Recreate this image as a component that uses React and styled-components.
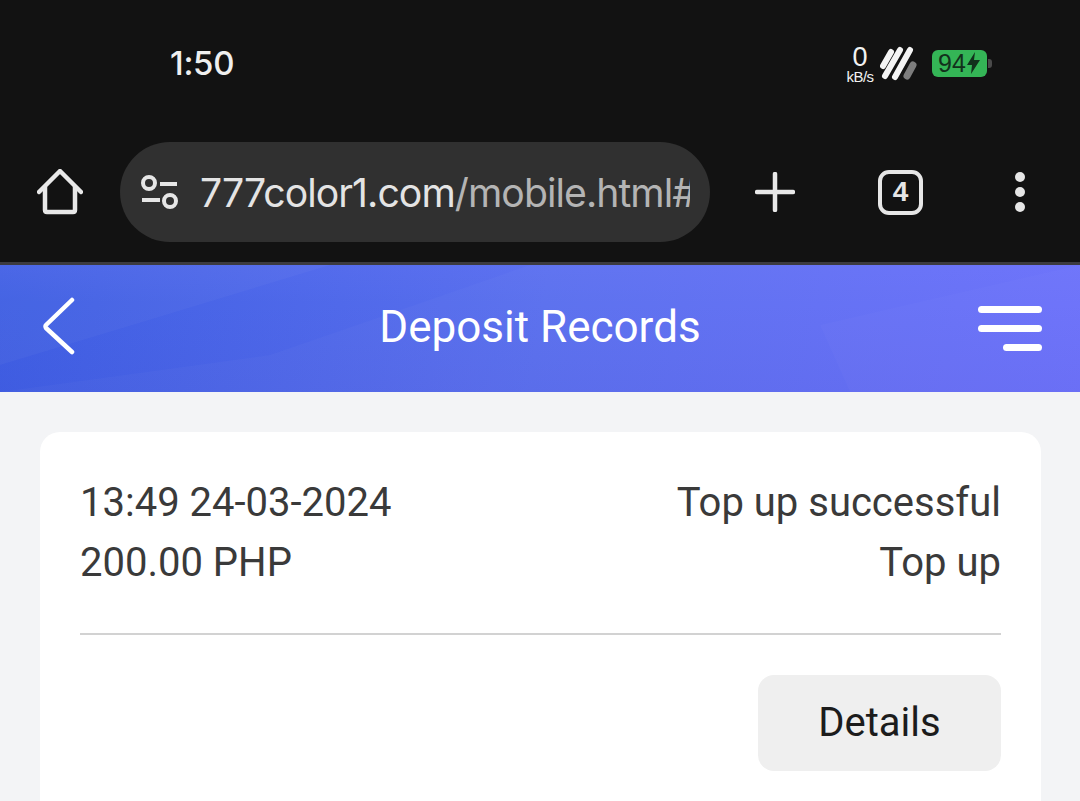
import React from "react";
import styled, { createGlobalStyle } from "styled-components";

const Global = createGlobalStyle`
  html, body { margin: 0; padding: 0; background: #f3f4f6; }
  body { width: 1080px; height: 801px; overflow: hidden; font-family: Roboto, "Liberation Sans", sans-serif; }
`;

const Page = styled.div`
  width: 1080px;
  height: 801px;
  overflow: hidden;
  background: #f3f4f6;
`;

const StatusBar = styled.div`
  height: 126px;
  box-sizing: border-box;
  background: #121212;
  padding: 0 93px 0 170px;
  display: flex;
  align-items: center;
  justify-content: space-between;
`;

const Clock = styled.div`
  font-family: Inter, "Open Sans", sans-serif;
  font-size: 33px;
  font-weight: 500;
  color: #efefef;
  letter-spacing: -0.3px;
`;

const StatusIcons = styled.div`
  display: flex;
  align-items: center;
`;

const Speed = styled.div`
  width: 28px;
  margin-right: 6px;
  margin-top: 3px;
  display: flex;
  flex-direction: column;
  align-items: center;
  color: #f2f2f2;
  font-family: "Liberation Sans", sans-serif;
  span:first-child { font-size: 27px; line-height: 23px; }
  span:last-child { font-size: 15px; line-height: 15px; letter-spacing: -0.6px; white-space: nowrap; }
`;

const Battery = styled.div`
  width: 55px;
  height: 27px;
  margin-left: 14px;
  box-sizing: border-box;
  border-radius: 6px;
  background: #34b556;
  color: #12301c;
  display: flex;
  align-items: center;
  justify-content: center;
  font-family: "Liberation Sans", sans-serif;
  font-size: 25px;
  position: relative;
  &::after {
    content: "";
    position: absolute;
    right: -5px;
    top: 9px;
    width: 4px;
    height: 9px;
    border-radius: 0 3px 3px 0;
    background: #4a4a4a;
  }
`;

const Toolbar = styled.div`
  height: 139px;
  box-sizing: border-box;
  background: #121212;
  border-bottom: 3px solid #3c3b40;
  padding: 16px 55px 20px 37px;
  display: flex;
  align-items: center;
`;

const UrlPill = styled.div`
  width: 590px;
  height: 100px;
  margin-left: 37px;
  margin-right: 45px;
  box-sizing: border-box;
  border-radius: 50px;
  background: #303030;
  padding: 0 20px 0 21px;
  display: flex;
  align-items: center;
  overflow: hidden;
`;

const UrlText = styled.div`
  margin-left: 21px;
  font-family: Inter, "Open Sans", sans-serif;
  font-size: 39.2px;
  letter-spacing: -0.95px;
  color: #e4e4e4;
  white-space: nowrap;
  overflow: hidden;
  flex: 1;
  span { color: #b4b4b4; }
`;

const ToolIcons = styled.div`
  display: flex;
  align-items: center;
`;

const TabCount = styled.div`
  width: 45px;
  height: 45px;
  margin-left: 83px;
  margin-right: 92px;
  box-sizing: border-box;
  border: 4px solid #e6e6e6;
  border-radius: 11px;
  color: #e6e6e6;
  display: flex;
  align-items: center;
  justify-content: center;
  font-family: "Liberation Sans", sans-serif;
  font-weight: 700;
  font-size: 28px;
`;

const Dots = styled.div`
  display: flex;
  flex-direction: column;
  gap: 5px;
  i { display: block; width: 10px; height: 10px; border-radius: 50%; background: #e6e6e6; }
`;

const Header = styled.div`
  height: 127px;
  box-sizing: border-box;
  background:
    linear-gradient(180deg, rgba(120, 130, 255, 0.12) 0%, rgba(60, 60, 200, 0) 30%, rgba(50, 50, 190, 0.08) 100%),
    linear-gradient(100deg, #3f5fe3 0%, #5a6fee 50%, #6a6ffa 100%);
  padding: 0 40px;
  display: grid;
  grid-template-columns: 1fr auto 1fr;
  align-items: center;
  position: relative;
  overflow: hidden;
`;

const Sheen = styled.svg`
  position: absolute;
  inset: 0;
  pointer-events: none;
`;

const BackIcon = styled.svg`
  position: relative;
  margin-left: 2px;
  margin-bottom: 6px;
`;

const Title = styled.div`
  font-size: 44px;
  color: #fff;
  margin-bottom: 4px;
  position: relative;
`;

const Burger = styled.div`
  justify-self: end;
  margin-right: -2px;
  display: flex;
  flex-direction: column;
  align-items: flex-end;
  gap: 12px;
  position: relative;
  i { display: block; height: 7px; width: 64px; border-radius: 4px; background: #fff; }
  i:last-child { width: 39px; }
`;

const Content = styled.div`
  padding: 40px 39px 0 40px;
`;

const Card = styled.div`
  background: #fff;
  border-radius: 20px;
  padding: 41px 40px 30px;
  height: 420px;
  box-sizing: border-box;
`;

const Row = styled.div`
  display: flex;
  justify-content: space-between;
  height: 60px;
  line-height: 60px;
  font-size: 40px;
  color: #3a3a3a;
`;

const Divider = styled.div`
  height: 2px;
  background: #d2d2d2;
  margin-top: 40px;
`;

const Actions = styled.div`
  display: flex;
  justify-content: flex-end;
  margin-top: 40px;
`;

const DetailsButton = styled.div`
  width: 243px;
  height: 96px;
  padding-bottom: 2px;
  box-sizing: border-box;
  border-radius: 16px;
  background: #efefef;
  color: #1c1c1c;
  font-size: 40px;
  display: flex;
  align-items: center;
  justify-content: center;
`;

export default function App() {
  return (
    <Page>
      <Global />
      <StatusBar>
        <Clock>1:50</Clock>
        <StatusIcons>
          <Speed>
            <span>0</span>
            <span>kB/s</span>
          </Speed>
          <svg width="38" height="36" viewBox="0 0 38 36" fill="none" strokeLinecap="round">
            <path d="M3 21 L11 7" stroke="#f4f4f4" strokeWidth="6" />
            <path d="M5 31 L20 5" stroke="#f4f4f4" strokeWidth="6" />
            <path d="M15 32 L30 5" stroke="#f4f4f4" strokeWidth="6" />
            <path d="M27 31 L33 20" stroke="#7d7d7d" strokeWidth="7" />
          </svg>
          <Battery>
            94
            <svg width="15" height="22" viewBox="0 0 15 22">
              <path d="M9 0 L1 13 H6 L5 22 L14 8 H8 Z" fill="#12301c" />
            </svg>
          </Battery>
        </StatusIcons>
      </StatusBar>
      <Toolbar>
        <svg width="46" height="46" viewBox="0 0 46 46" fill="none" stroke="#e8e8e8" strokeWidth="4.5" strokeLinecap="round" strokeLinejoin="round">
          <path d="M2 23 L23 2 L44 23" />
          <path d="M8 18 V41 Q8 43 10 43 H36 Q38 43 38 41 V18" />
        </svg>
        <UrlPill>
          <svg width="38" height="34" viewBox="0 0 38 34" fill="none" stroke="#e6e6e6" strokeWidth="4">
            <circle cx="8" cy="8" r="6" />
            <path d="M19 9 H36" />
            <path d="M1 25 H19" />
            <circle cx="29" cy="26" r="6" />
          </svg>
          <UrlText>
            777color1.com<span>/mobile.html#</span>
          </UrlText>
        </UrlPill>
        <ToolIcons>
          <svg width="40" height="40" viewBox="0 0 40 40" stroke="#e8e8e8" strokeWidth="4.5" strokeLinecap="round">
            <path d="M20 2 V38" />
            <path d="M2 20 H38" />
          </svg>
          <TabCount>4</TabCount>
          <Dots>
            <i />
            <i />
            <i />
          </Dots>
        </ToolIcons>
      </Toolbar>
      <Header>
        <Sheen width="1080" height="127" viewBox="0 0 1080 127" fill="none">
          <path d="M0 100 L330 0 H0 Z" fill="#ffffff" opacity="0.03" />
          <path d="M0 127 L270 90 L530 0 L1080 0 V127 Z" fill="#ffffff" opacity="0.025" />
          <path d="M820 60 L850 127 H1080 V0 Z" fill="#ffffff" opacity="0.02" />
        </Sheen>
        <BackIcon width="34" height="58" viewBox="0 0 34 58" fill="none" stroke="#fff" strokeWidth="4.5" strokeLinecap="round" strokeLinejoin="round">
          <path d="M30 3 L4 28 Q3 29 4 31 L30 55" />
        </BackIcon>
        <Title>Deposit Records</Title>
        <Burger>
          <i />
          <i />
          <i />
        </Burger>
      </Header>
      <Content>
        <Card>
          <Row>
            <span>13:49 24-03-2024</span>
            <span>Top up successful</span>
          </Row>
          <Row>
            <span>200.00 PHP</span>
            <span>Top up</span>
          </Row>
          <Divider />
          <Actions>
            <DetailsButton>Details</DetailsButton>
          </Actions>
        </Card>
      </Content>
    </Page>
  );
}
